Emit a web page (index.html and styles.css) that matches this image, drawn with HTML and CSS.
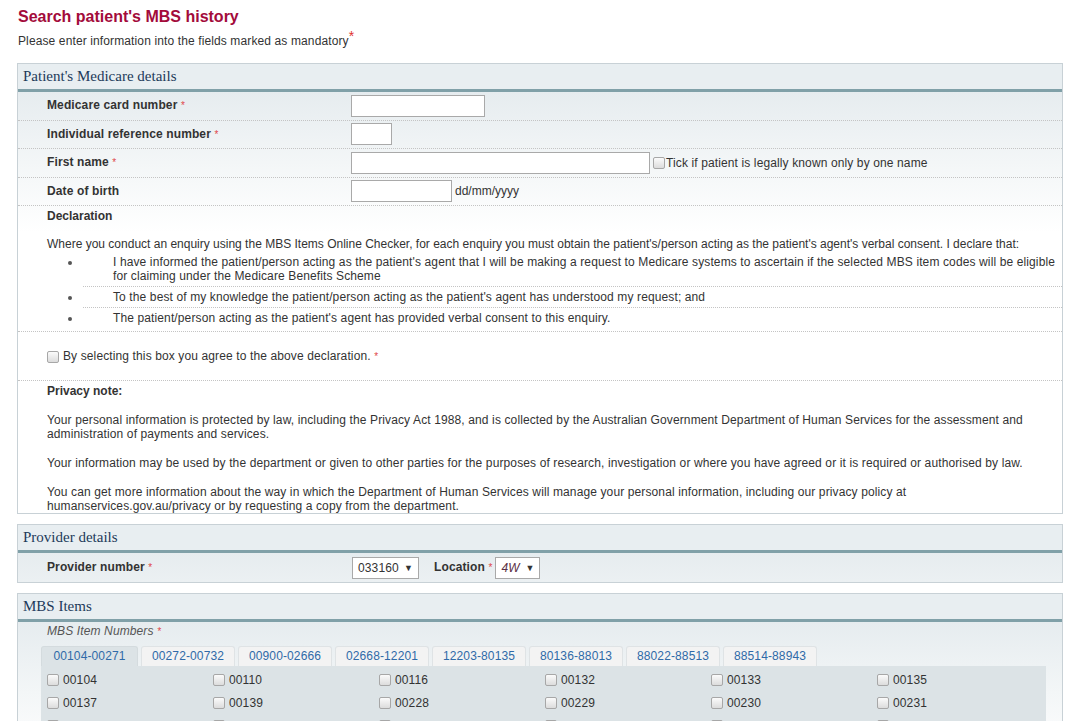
FILE: index.html
```html
<!doctype html>
<html lang="en">
<head>
    <meta charset="utf-8">
    <title>Search patient's MBS history</title>
    <link rel="stylesheet" href="styles.css">
</head>
<body>
    <div class="page">
        <h1 class="page-title">Search patient's MBS history</h1>
        <p class="intro">Please enter information into the fields marked as mandatory<sup class="req-big">*</sup></p>

        <!-- Patient details -->
        <div class="panel">
            <div class="panel-head">Patient's Medicare details</div>
            <div class="panel-body">
                <div class="row">
                    <div class="row-label">Medicare card number <span class="req">*</span></div>
                    <div class="row-field"><input type="text" class="text w-card"></div>
                </div>
                <div class="row">
                    <div class="row-label">Individual reference number <span class="req">*</span></div>
                    <div class="row-field"><input type="text" class="text w-irn"></div>
                </div>
                <div class="row">
                    <div class="row-label">First name <span class="req">*</span></div>
                    <div class="row-field">
                        <input type="text" class="text w-name">
                        <label class="one-name"><input type="checkbox">Tick if patient is legally known only by one name</label>
                    </div>
                </div>
                <div class="row">
                    <div class="row-label">Date of birth</div>
                    <div class="row-field">
                        <input type="text" class="text w-dob">
                        <span class="hint">dd/mm/yyyy</span>
                    </div>
                </div>

                <div class="block declaration">
                    <h3 class="block-title">Declaration</h3>
                    <p class="decl-intro">Where you conduct an enquiry using the MBS Items Online Checker, for each enquiry you must obtain the patient's/person acting as the patient's agent's verbal consent. I declare that:</p>
                    <ul class="decl-list">
                        <li>I have informed the patient/person acting as the patient's agent that I will be making a request to Medicare systems to ascertain if the selected MBS item codes will be eligible for claiming under the Medicare Benefits Scheme</li>
                        <li>To the best of my knowledge the patient/person acting as the patient's agent has understood my request; and</li>
                        <li>The patient/person acting as the patient's agent has provided verbal consent to this enquiry.</li>
                    </ul>
                </div>

                <div class="agree-row">
                    <label><input type="checkbox"><span>By selecting this box you agree to the above declaration. <span class="req">*</span></span></label>
                </div>

                <div class="block privacy">
                    <h3 class="block-title">Privacy note:</h3>
                    <p>Your personal information is protected by law, including the Privacy Act 1988, and is collected by the Australian Government Department of Human Services for the assessment and administration of payments and services.</p>
                    <p>Your information may be used by the department or given to other parties for the purposes of research, investigation or where you have agreed or it is required or authorised by law.</p>
                    <p>You can get more information about the way in which the Department of Human Services will manage your personal information, including our privacy policy at humanservices.gov.au/privacy or by requesting a copy from the department.</p>
                </div>
            </div>
        </div>

        <!-- Provider -->
        <div class="panel">
            <div class="panel-head">Provider details</div>
            <div class="panel-body">
                <div class="row row-last">
                    <div class="row-label">Provider number <span class="req">*</span></div>
                    <div class="row-field">
                        <span class="select w-prov">033160<span class="arrow">&#9660;</span></span>
                        <span class="field-label">Location <span class="req">*</span></span>
                        <span class="select w-loc"><em>4W</em><span class="arrow">&#9660;</span></span>
                    </div>
                </div>
            </div>
        </div>

        <!-- MBS items -->
        <div class="panel">
            <div class="panel-head">MBS Items</div>
            <div class="panel-body items-body">
                <div class="items-label">MBS Item Numbers <span class="req">*</span></div>
                <div class="tabs">
                    <span class="tab active">00104-00271</span>
                    <span class="tab">00272-00732</span>
                    <span class="tab">00900-02666</span>
                    <span class="tab">02668-12201</span>
                    <span class="tab">12203-80135</span>
                    <span class="tab">80136-88013</span>
                    <span class="tab">88022-88513</span>
                    <span class="tab">88514-88943</span>
                </div>
                <div class="tab-panel">
                    <label class="item"><input type="checkbox">00104</label>
                    <label class="item"><input type="checkbox">00110</label>
                    <label class="item"><input type="checkbox">00116</label>
                    <label class="item"><input type="checkbox">00132</label>
                    <label class="item"><input type="checkbox">00133</label>
                    <label class="item"><input type="checkbox">00135</label>
                    <label class="item"><input type="checkbox">00137</label>
                    <label class="item"><input type="checkbox">00139</label>
                    <label class="item"><input type="checkbox">00228</label>
                    <label class="item"><input type="checkbox">00229</label>
                    <label class="item"><input type="checkbox">00230</label>
                    <label class="item"><input type="checkbox">00231</label>
                    <label class="item"><input type="checkbox">00232</label>
                    <label class="item"><input type="checkbox">00233</label>
                    <label class="item"><input type="checkbox">00235</label>
                    <label class="item"><input type="checkbox">00236</label>
                    <label class="item"><input type="checkbox">00237</label>
                    <label class="item"><input type="checkbox">00238</label>
                </div>
            </div>
        </div>
    </div>
</body>
</html>
```

FILE: styles.css
```css
/* General */
body {
    margin: 0;
    font-family: "Liberation Sans", Arial, sans-serif;
    font-size: 12px;
    line-height: 14px;
    letter-spacing: 0.12px;
    color: #333;
    background: #fff;
}

.page {
    margin: 0 8px 0 17px;
    padding-bottom: 20px;
}

.page-title {
    margin: 8px 0 0 1px;
    font-size: 16px;
    line-height: 18px;
    font-weight: bold;
    letter-spacing: 0;
    color: #a30b3b;
}

.intro {
    margin: 8px 0 15px 1px;
}

.req-big {
    color: #e0312f;
    font-size: 14px;
    line-height: 0;
    vertical-align: 4px;
}

.req {
    color: #e0484a;
    font-size: 10px;
    font-weight: normal;
}

/* Checkboxes */
input[type="checkbox"] {
    appearance: none;
    -webkit-appearance: none;
    width: 12px;
    height: 12px;
    box-sizing: border-box;
    border: 1px solid #a7a7a7;
    border-radius: 2px;
    background: linear-gradient(to bottom, #fbfbfb, #dcdcdc);
    flex-shrink: 0;
}

/* Panels */
.panel {
    border: 1px solid #c8d1d6;
    margin-bottom: 10px;
}

.panel-head {
    height: 25px;
    line-height: 25px;
    padding-left: 5px;
    background-color: #e8eef1;
    border-bottom: 3px solid #80a0a8;
    font-family: "Liberation Serif", Georgia, serif;
    font-size: 15px;
    letter-spacing: 0;
    color: #1d3a5a;
}

.panel-body {
    background: linear-gradient(to bottom, #e6ecef 0, #f3f6f7 70px, #ffffff 140px);
}

/* Label / field rows */
.row {
    display: grid;
    grid-template-columns: 333px 1fr;
    align-items: center;
    height: 28.5px;
    box-sizing: border-box;
    border-bottom: 1px dotted #c4c4c4;
}

.row-last {
    height: 29px;
    border-bottom: none;
}

.row-label {
    padding-left: 29px;
    font-weight: bold;
}

.row-field {
    display: flex;
    align-items: center;
}

.text {
    height: 22px;
    box-sizing: border-box;
    border: 1px solid #a9a9a9;
    background: #fff;
    margin: 0;
    padding: 2px 4px;
    font: inherit;
}

.w-card { width: 134px; }
.w-irn  { width: 41px; }
.w-name { width: 299px; }
.w-dob  { width: 101px; }

.one-name {
    display: flex;
    align-items: center;
}

.one-name input {
    margin: 0 1px 0 3px;
}

.hint {
    margin-left: 3px;
    letter-spacing: 0;
}

/* Text blocks */
.block {
    padding: 3px 9px 3px 29px;
    border-bottom: 1px dotted #c4c4c4;
}

.block-title {
    margin: 0;
    font-size: 12px;
    line-height: 14px;
    font-weight: bold;
    letter-spacing: 0;
}

.block p {
    margin: 14px 0 0;
}

.decl-intro {
    letter-spacing: 0;
}

.decl-list {
    margin: 1px -9px 0 36px;
    padding: 0;
    list-style: none;
}

.decl-list li {
    position: relative;
    padding: 3px 2px 3px 30px;
    border-bottom: 1px dotted #c4c4c4;
}

.decl-list li:last-child {
    border-bottom: none;
}

.decl-list li::before {
    content: "";
    position: absolute;
    left: -15px;
    top: 9px;
    width: 4px;
    height: 4px;
    border-radius: 50%;
    background: #555;
}

.agree-row {
    padding: 17px 0 16px 29px;
    border-bottom: 1px dotted #c4c4c4;
}

.agree-row label {
    display: flex;
    align-items: center;
}

.agree-row input {
    margin: 0 4px 0 0;
}

.privacy {
    border-bottom: none;
    padding-bottom: 0;
}

.privacy p {
    margin-top: 15px;
}

/* Selects */
.select {
    display: inline-flex;
    align-items: center;
    justify-content: space-between;
    height: 22px;
    box-sizing: border-box;
    border: 1px solid #a9a9a9;
    background: #fff;
    padding: 0 5px 0 5px;
    margin-left: 1px;
}

.select .arrow {
    font-size: 9px;
    color: #333;
}

.select em {
    color: #5a2f45;
}

.w-prov { width: 67px; }
.w-loc  { width: 45px; margin-left: 0; }

.field-label {
    margin: 0 3px 0 15px;
    font-weight: bold;
}

/* MBS items */
.items-body {
    padding: 2px 16px 0 23px;
}

.items-label {
    padding-left: 6px;
    font-style: italic;
    color: #555;
}

.tabs {
    display: flex;
    gap: 3px;
    margin-top: 7px;
}

.tab {
    width: 94px;
    height: 20px;
    box-sizing: border-box;
    line-height: 19px;
    text-align: center;
    background: #f3f3f3;
    border: 1px solid #dfe3e5;
    border-bottom: none;
    border-radius: 3px 3px 0 0;
    color: #2f6aa8;
}

.tab.active {
    background: #dce3e6;
    border-color: #d4dbde;
    width: 97px;
}

.tab-panel {
    display: grid;
    grid-template-columns: repeat(6, 166px);
    padding: 2px 0 4px 6px;
    background: #dce3e6;
}

.item {
    display: flex;
    align-items: center;
    height: 23px;
}

.item input {
    margin: 0 4px 0 0;
}
```
